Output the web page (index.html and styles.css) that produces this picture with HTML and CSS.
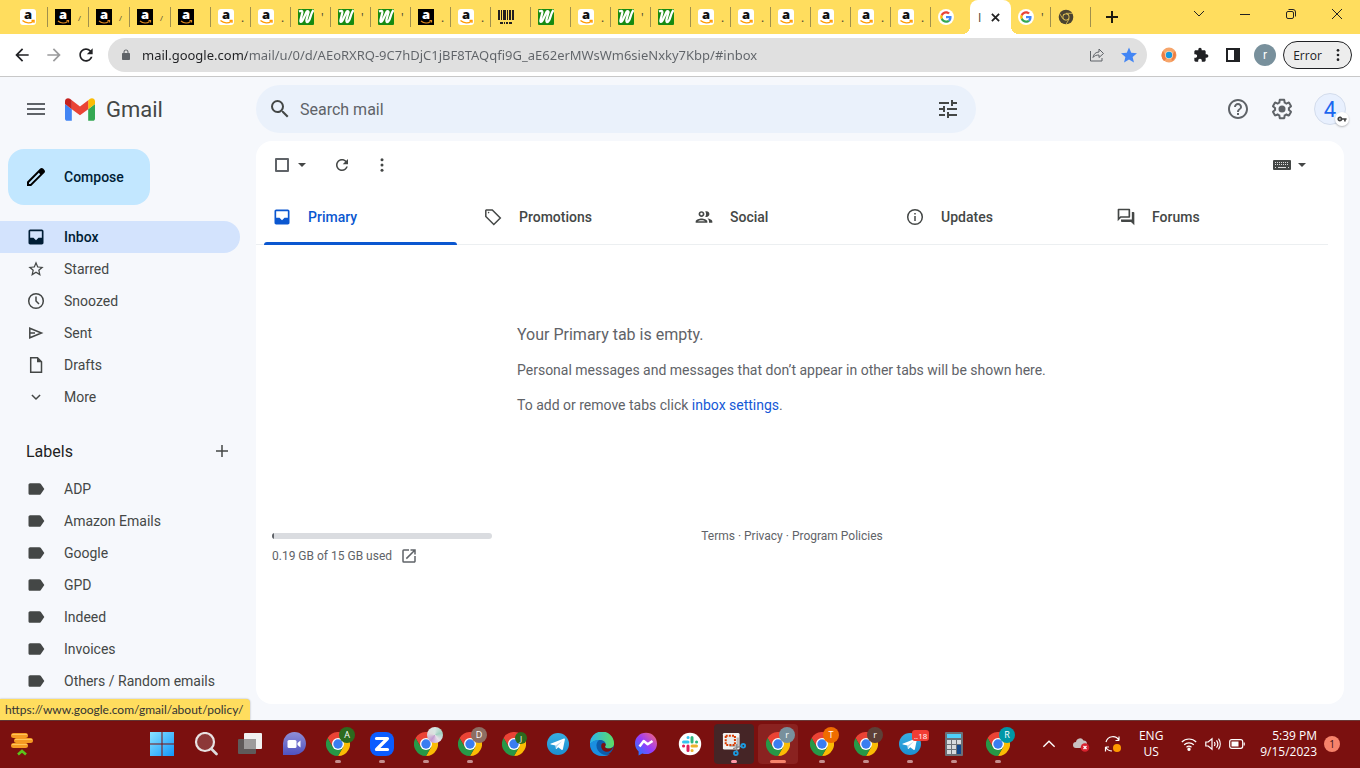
FILE: index.html
```html
<!DOCTYPE html>
<html lang="en">
<head>
  <meta charset="UTF-8" />
  <meta name="viewport" content="width=device-width, initial-scale=1.0" />
  <title>Inbox - Gmail</title>
  <link rel="stylesheet" href="styles.css">
</head>
<body>
  <svg class="sprite" aria-hidden="true">
    <defs>
      <linearGradient id="gWin" x1="0" y1="0" x2="1" y2="1"><stop offset="0" stop-color="#8be3ff"/><stop offset="1" stop-color="#1096fb"/></linearGradient>
      <linearGradient id="gTeams" x1="0" y1="0" x2="0" y2="1"><stop offset="0" stop-color="#8f8ed6"/><stop offset="1" stop-color="#4f52c0"/></linearGradient>
      <linearGradient id="gTele" x1="0" y1="0" x2="0" y2="1"><stop offset="0" stop-color="#37aee2"/><stop offset="1" stop-color="#1c8fd0"/></linearGradient>
      <linearGradient id="gMsg" x1="0" y1="1" x2="1" y2="0"><stop offset="0" stop-color="#0a84ff"/><stop offset=".5" stop-color="#9a3bfb"/><stop offset="1" stop-color="#ff6a70"/></linearGradient>
      <linearGradient id="gEdge" x1="0" y1="0" x2="1" y2="0"><stop offset="0" stop-color="#2bb4ee"/><stop offset="1" stop-color="#5fdc62"/></linearGradient>
    </defs>
    <symbol id="amazon-w" viewBox="0 0 16 16"><rect width="16" height="16" rx="3" fill="#fff"/><text x="8" y="10" text-anchor="middle" font-family="Open Sans" font-weight="800" font-size="13" fill="#111">a</text><path d="M2.500 11.500c3.500 3 8 3 10.500 1M11.500 11.500h2.500v2.200" fill="none" stroke="#f90" stroke-width="1.400"/></symbol>
    <symbol id="amazon-b" viewBox="0 0 16 16"><rect width="16" height="16" fill="#000"/><text x="8" y="10" text-anchor="middle" font-family="Open Sans" font-weight="800" font-size="13" fill="#fff">a</text><path d="M3 12c3 2.500 7 2.500 9.500 .5M11.500 11.500h2v2" fill="none" stroke="#e08a1e" stroke-width="1.200"/></symbol>
    <symbol id="green" viewBox="0 0 16 16"><rect width="16" height="16" rx="1" fill="#178a12"/><path d="M1 2.500C4 1 5 2 4 5L2.500 11c-.5 2.500 1 2.500 2 .5L8.500 3C9.500 1.500 11 2 10.300 4L8.500 10.500C8 13.500 9.500 14 11 11.500 12.500 9 13 4 15.500 1" fill="none" stroke="#fff" stroke-width="2.300" stroke-linejoin="round"/></symbol>
    <symbol id="barcode" viewBox="0 0 16 16"><path d="M0 1h2v10H0zM3 1h1v10H3zM5 1h3v10H5zM9 1h1v10H9zM11 1h2v10h-2zM14 1h2v10h-2zM2 13h3v2H2zM6 13h1v2H6zM8 13h2v2H8zM11 13h3v2h-3z" fill="#231f20"/></symbol>
    <symbol id="google" viewBox="-9 -9 66 66"><circle cx="24" cy="24" r="33" fill="#fff"/><path fill="#ea4335" d="M24 9.500c3.540 0 6.710 1.220 9.210 3.600l6.850-6.850C35.900 2.380 30.470 0 24 0 14.620 0 6.510 5.380 2.560 13.220l7.980 6.190C12.430 13.720 17.740 9.500 24 9.500z"/><path fill="#4285f4" d="M46.980 24.550c0-1.570-.15-3.090-.38-4.550H24v9.020h12.940c-.58 2.960-2.260 5.480-4.780 7.180l7.730 6c4.510-4.180 7.090-10.360 7.090-17.650z"/><path fill="#fbbc05" d="M10.530 28.590c-.48-1.450-.76-2.990-.76-4.590s.27-3.140.76-4.590l-7.980-6.190C.92 16.460 0 20.120 0 24c0 3.880.92 7.540 2.560 10.780l7.970-6.190z"/><path fill="#34a853" d="M24 48c6.480 0 11.930-2.130 15.890-5.810l-7.730-6c-2.150 1.450-4.920 2.300-8.160 2.300-6.260 0-11.570-4.220-13.470-9.910l-7.980 6.190C6.510 42.620 14.620 48 24 48z"/></symbol>
    <symbol id="chrome-gray" viewBox="0 0 24 24"><circle cx="12" cy="12" r="11" fill="#4a4331"/><path d="M12 6.500h10M7.200 14.700 2.300 6.500M16.800 14.700 12 23" stroke="#ffdd5e" stroke-width="1"/><circle cx="12" cy="12" r="5.200" fill="#ffdd5e"/><circle cx="12" cy="12" r="4" fill="#4a4331"/></symbol>
    <symbol id="chrome" viewBox="0 0 24 24"><path fill="#ea4335" d="M1.600 6A12 12 0 0 1 22.400 6H12L6.800 15z"/><path fill="#fbbc04" d="M22.400 6A12 12 0 0 1 12 24l5.200-9L12 6z"/><path fill="#279847" d="M12 24A12 12 0 0 1 1.600 6l5.200 9h10.400z"/><circle cx="12" cy="12" r="6" fill="#fff"/><circle cx="12" cy="12" r="4.700" fill="#3a7df0"/></symbol>
    <symbol id="telegram" viewBox="0 0 24 24"><circle cx="12" cy="12" r="11" fill="url(#gTele)"/><path d="M4.500 11.800 18 6.500c.7-.2 1 .2.900.9l-2 9.800c-.2.800-.8.900-1.400.5l-3.300-2.500-1.700 1.700c-.4.300-.7.200-.7-.3l-.3-3L5 12.600c-.8-.2-.8-.6-.5-.8z" fill="#fff"/><path d="m9.600 13.600 6.400-4.400-5 5.400-.5 2.300z" fill="#b9d9ee"/></symbol>
    <symbol id="back" viewBox="0 0 24 24"><path d="M20 11H7.830l5.590-5.590L12 4l-8 8 8 8 1.410-1.410L7.830 13H20v-2z"/></symbol>
    <symbol id="refresh" viewBox="0 0 24 24"><path d="M17.650 6.350C16.200 4.900 14.210 4 12 4c-4.420 0-7.990 3.580-7.990 8s3.570 8 7.990 8c3.730 0 6.840-2.550 7.730-6h-2.080c-.82 2.330-3.040 4-5.650 4-3.310 0-6-2.690-6-6s2.690-6 6-6c1.660 0 3.140.69 4.220 1.780L13 11h7V4l-2.350 2.350z"/></symbol>
    <symbol id="dots" viewBox="0 0 24 24"><circle cx="12" cy="5" r="2"/><circle cx="12" cy="12" r="2"/><circle cx="12" cy="19" r="2"/></symbol>
    <symbol id="tray-full" viewBox="0 0 24 24"><path fill-rule="evenodd" d="M19 3H5c-1.100 0-2 .9-2 2v14c0 1.100.9 2 2 2h14c1.100 0 2-.9 2-2V5c0-1.100-.9-2-2-2zm0 10h-4l-3 3-3-3H5V5h14v8z"/></symbol>
    <symbol id="label" viewBox="0 0 24 24"><path d="M17.630 5.840C17.270 5.330 16.670 5 16 5H5c-1.100 0-2 .9-2 2v10c0 1.100.9 2 2 2h11c.67 0 1.270-.33 1.630-.84L22 12z"/></symbol>
    <symbol id="caret" viewBox="0 0 10 10"><path d="M1 3h8L5 7z"/></symbol>
  </svg>

  <!-- browser tabs -->
  <div class="tabstrip">
    <div class="tab first"><svg><use href="#amazon-w"/></svg></div>
    <div class="tab wide"><svg><use href="#amazon-b"/></svg><span>/</span></div>
    <div class="tab wide"><svg><use href="#amazon-b"/></svg><span>/</span></div>
    <div class="tab wide"><svg><use href="#amazon-b"/></svg><span>/</span></div>
    <div class="tab"><svg><use href="#amazon-b"/></svg></div>
    <div class="tab"><svg><use href="#amazon-w"/></svg><span>.</span></div>
    <div class="tab"><svg><use href="#amazon-w"/></svg><span>.</span></div>
    <div class="tab"><svg><use href="#green"/></svg><span>'</span></div>
    <div class="tab"><svg><use href="#green"/></svg><span>'</span></div>
    <div class="tab"><svg><use href="#green"/></svg><span>'</span></div>
    <div class="tab"><svg><use href="#amazon-b"/></svg><span>.</span></div>
    <div class="tab"><svg><use href="#amazon-w"/></svg><span>.</span></div>
    <div class="tab"><svg><use href="#barcode"/></svg></div>
    <div class="tab"><svg><use href="#green"/></svg></div>
    <div class="tab"><svg><use href="#amazon-w"/></svg><span>.</span></div>
    <div class="tab"><svg><use href="#green"/></svg><span>'</span></div>
    <div class="tab"><svg><use href="#green"/></svg></div>
    <div class="tab"><svg><use href="#amazon-w"/></svg><span>.</span></div>
    <div class="tab"><svg><use href="#amazon-w"/></svg><span>.</span></div>
    <div class="tab"><svg><use href="#amazon-w"/></svg><span>.</span></div>
    <div class="tab"><svg><use href="#amazon-w"/></svg><span>.</span></div>
    <div class="tab"><svg><use href="#amazon-w"/></svg><span>.</span></div>
    <div class="tab"><svg><use href="#amazon-w"/></svg><span>.</span></div>
    <div class="tab"><svg><use href="#google"/></svg></div>
    <div class="tab active"><span>I</span><button class="tab-close" aria-label="Close tab"><svg viewBox="0 0 10 10"><path d="m1 1 8 8M9 1 1 9"/></svg></button></div>
    <div class="tab plain"><svg><use href="#google"/></svg><span>'</span></div>
    <div class="tab"><svg><use href="#chrome-gray"/></svg></div>
    <div class="tab new"><button class="new-tab" aria-label="New tab"><svg viewBox="0 0 12 12"><path d="M6 0v12M0 6h12"/></svg></button></div>
    <div class="win-buttons">
      <button aria-label="Search tabs"><svg viewBox="0 0 12 12"><path d="m1 3 5 5 5-5"/></svg></button>
      <button aria-label="Minimize"><svg viewBox="0 0 12 12"><path d="M1 6.500h10"/></svg></button>
      <button aria-label="Restore"><svg viewBox="0 0 12 12"><rect x="1.500" y="3.500" width="7" height="7" rx="1.500"/><path d="M3.500 1.500H8A2.500 2.500 0 0 1 10.500 4v4.500"/></svg></button>
      <button aria-label="Close"><svg viewBox="0 0 12 12"><path d="m1 1 10 10M11 1 1 11"/></svg></button>
    </div>
  </div>

  <!-- address bar -->
  <div class="toolbar">
    <button class="nav-btn" aria-label="Back"><svg><use href="#back"/></svg></button>
    <button class="nav-btn forward" aria-label="Forward"><svg><use href="#back"/></svg></button>
    <button class="nav-btn" aria-label="Reload"><svg><use href="#refresh"/></svg></button>
    <div class="omnibox">
      <svg class="lock" viewBox="0 0 24 24"><path d="M18 8h-1V6c0-2.760-2.240-5-5-5S7 3.240 7 6v2H6c-1.100 0-2 .9-2 2v10c0 1.100.9 2 2 2h12c1.100 0 2-.9 2-2V10c0-1.100-.9-2-2-2zM9 6c0-1.660 1.340-3 3-3s3 1.340 3 3v2H9V6z"/></svg>
      <input class="url" type="text" aria-label="Address and search bar" value="mail.google.com/mail/u/0/d/AEoRXRQ-9C7hDjC1jBF8TAQqfi9G_aE62erMWsWm6sieNxky7Kbp/#inbox">
      <button class="omni-btn share" aria-label="Share"><svg viewBox="0 0 16 16"><path d="M1.500 4v10h11.500v-3M4 10.500C4.500 7 7 5 10 5V2l4.500 4.500L10 10.500V8C7.500 8 5.500 8.500 4 10.500z"/></svg></button>
      <button class="omni-btn fav" aria-label="Bookmark"><svg viewBox="2 1.500 20 20"><path d="M12 17.270 18.180 21l-1.640-7.030L22 9.240l-7.190-.61L12 2 9.190 8.630 2 9.240l5.460 4.730L5.820 21z"/></svg></button>
    </div>
    <div class="extensions">
      <button aria-label="Extension"><svg viewBox="0 0 16 16"><circle cx="8" cy="8" r="7.500" fill="#f6a56b"/><path d="M2 4a7.500 7.500 0 0 0 1 10l3-3zM14 4a7.500 7.500 0 0 1-3 10l-1-4z" fill="#ee7f45"/><circle cx="8" cy="8" r="4" fill="#fbd7b4"/><circle cx="8" cy="8" r="3.200" fill="#1698e0"/></svg></button>
      <button aria-label="Extensions"><svg viewBox="0 0 24 24"><path d="M20.500 11H19V7c0-1.100-.9-2-2-2h-4V3.500C13 2.120 11.880 1 10.500 1S8 2.120 8 3.500V5H4c-1.100 0-1.990.9-1.990 2v3.800H3.500c1.490 0 2.700 1.210 2.700 2.700s-1.210 2.700-2.700 2.700H2V20c0 1.100.9 2 2 2h3.800v-1.500c0-1.490 1.210-2.700 2.700-2.700 1.490 0 2.700 1.210 2.700 2.700V22H17c1.100 0 2-.9 2-2v-4h1.500c1.380 0 2.500-1.120 2.500-2.500S21.880 11 20.500 11z"/></svg></button>
      <button aria-label="Side panel"><svg viewBox="0 0 16 16"><path fill-rule="evenodd" d="M1 1h14v14H1zM3 3v10h6V3z"/></svg></button>
      <button class="avatar" aria-label="Profile">r</button>
    </div>
    <button class="error-pill">Error<svg><use href="#dots"/></svg></button>
  </div>

  <div class="gmail">
    <header class="header">
      <div class="brand">
        <button class="icon-btn" aria-label="Main menu"><svg class="i24" viewBox="0 0 24 24"><path d="M3 18h18v-2H3v2zm0-5h18v-2H3v2zm0-7v2h18V6H3z"/></svg></button>
        <a class="logo" href="#inbox">
          <svg viewBox="52 42 88 66"><path fill="#4285f4" d="M58 108h14V74L52 59v43c0 3.320 2.690 6 6 6"/><path fill="#34a853" d="M120 108h14c3.320 0 6-2.690 6-6V59l-20 15"/><path fill="#fbbc04" d="M120 48v26l20-15v-8c0-7.420-8.470-11.650-14.400-7.200"/><path fill="#ea4335" d="M72 74V48l24 18 24-18v26L96 92"/><path fill="#c5221f" d="M52 51v8l20 15V48l-5.600-4.200c-5.940-4.450-14.400-.22-14.400 7.200"/></svg>
          <span>Gmail</span>
        </a>
      </div>
      <form class="search">
        <button type="button" class="icon-btn" aria-label="Search"><svg class="i24" viewBox="0 0 24 24"><path d="M15.500 14h-.79l-.28-.27A6.471 6.471 0 0 0 16 9.500 6.500 6.500 0 1 0 9.500 16c1.610 0 3.090-.59 4.230-1.570l.27.28v.79l5 4.990L20.490 19l-4.990-5zm-6 0C7.010 14 5 11.990 5 9.500S7.010 5 9.500 5 14 7.010 14 9.500 11.990 14 9.500 14z"/></svg></button>
        <input type="text" placeholder="Search mail" aria-label="Search mail">
        <button type="button" class="icon-btn" aria-label="Show search options"><svg class="i24" viewBox="0 0 24 24"><path d="M3 17v2h6v-2H3zM3 5v2h10V5H3zm10 16v-2h8v-2h-8v-2h-2v6h2zM7 9v2H3v2h4v2h2V9H7zm14 4v-2H11v2h10zm-6-4h2V7h4V5h-4V3h-2v6z"/></svg></button>
      </form>
      <div class="account">
        <button class="icon-btn" aria-label="Support"><svg class="i24" viewBox="0 0 24 24"><path d="M11 18h2v-2h-2v2zm1-16C6.480 2 2 6.480 2 12s4.480 10 10 10 10-4.480 10-10S17.520 2 12 2zm0 18c-4.410 0-8-3.590-8-8s3.590-8 8-8 8 3.590 8 8-3.590 8-8 8zm0-14c-2.210 0-4 1.790-4 4h2c0-1.100.9-2 2-2s2 .9 2 2c0 2-3 1.750-3 5h2c0-2.250 3-2.500 3-5 0-2.210-1.790-4-4-4z"/></svg></button>
        <button class="icon-btn" aria-label="Settings"><svg class="i24" viewBox="0 0 24 24"><path d="M13.850 22.250h-3.700c-.74 0-1.360-.54-1.450-1.270l-.27-1.890c-.27-.14-.53-.29-.79-.46l-1.800.72c-.7.26-1.470-.03-1.810-.65L2.200 15.530c-.35-.66-.2-1.440.36-1.880l1.530-1.190c-.01-.15-.02-.3-.02-.46 0-.15.01-.31.02-.46l-1.520-1.190c-.59-.45-.74-1.260-.37-1.880l1.850-3.190c.34-.62 1.110-.9 1.790-.63l1.810.73c.26-.17.52-.32.78-.46l.27-1.910c.09-.7.71-1.250 1.440-1.250h3.700c.74 0 1.360.54 1.450 1.270l.27 1.890c.27.14.53.29.79.46l1.800-.72c.71-.26 1.480.03 1.820.65l1.840 3.180c.36.66.2 1.440-.36 1.880l-1.520 1.190c.01.15.02.3.02.46s-.01.31-.02.46l1.520 1.190c.56.45.72 1.230.37 1.860l-1.860 3.220c-.34.62-1.110.9-1.800.63l-1.800-.72c-.26.17-.52.32-.78.46l-.27 1.910c-.1.680-.72 1.220-1.460 1.220zm-3.230-2h2.760l.37-2.550.53-.22c.44-.18.88-.44 1.340-.78l.45-.34 2.380.96 1.380-2.400-2.030-1.580.07-.56c.03-.26.06-.51.06-.78s-.03-.53-.06-.78l-.07-.56 2.030-1.580-1.390-2.400-2.390.96-.45-.35c-.42-.32-.87-.58-1.330-.77l-.52-.22-.37-2.550h-2.760l-.37 2.550-.53.21c-.44.19-.88.44-1.340.79l-.45.33-2.380-.95-1.390 2.390 2.030 1.580-.07.56a7 7 0 0 0-.06.79c0 .26.02.53.06.78l.07.56-2.030 1.580 1.380 2.400 2.390-.96.45.35c.43.33.86.58 1.330.77l.53.22.38 2.550z"/><circle cx="12" cy="12" r="3.500"/></svg></button>
        <button class="profile" aria-label="Google Account">4<span class="key"><svg viewBox="0 0 24 24"><path d="M12.650 10C11.830 7.670 9.610 6 7 6c-3.310 0-6 2.690-6 6s2.690 6 6 6c2.610 0 4.830-1.670 5.650-4H17v4h4v-4h2v-4H12.650zM7 14c-1.100 0-2-.9-2-2s.9-2 2-2 2 .9 2 2-.9 2-2 2z"/></svg></span></button>
      </div>
    </header>

    <div class="columns">
      <aside class="sidebar">
        <button class="compose"><svg class="i24" viewBox="0 0 24 24"><path d="M20.410 4.940l-1.350-1.350c-.78-.78-2.050-.78-2.830 0L3 16.820V21h4.180L20.410 7.770c.79-.78.79-2.050 0-2.830zm-14 14.120L5 19v-1.360l9.820-9.820 1.410 1.410-9.820 9.830z"/></svg>Compose</button>
        <nav>
          <a class="nav-item selected" href="#inbox"><svg><use href="#tray-full"/></svg>Inbox</a>
          <a class="nav-item" href="#starred"><svg viewBox="-1 -1 26 26"><path d="M22 9.240l-7.190-.62L12 2 9.190 8.630 2 9.240l5.460 4.730L5.820 21 12 17.270 18.180 21l-1.630-7.030L22 9.240zM12 15.400l-3.760 2.270 1-4.280-3.320-2.880 4.380-.38L12 6.100l1.710 4.040 4.380.38-3.320 2.880 1 4.280L12 15.400z"/></svg>Starred</a>
          <a class="nav-item" href="#snoozed"><svg class="line" viewBox="0 0 20 20"><circle cx="10" cy="10" r="7.300"/><path d="M10 5.500V10l3 3"/></svg>Snoozed</a>
          <a class="nav-item" href="#sent"><svg class="line" viewBox="0 0 20 20"><path d="M3.800 5.200 15.500 10 3.800 14.800V5.200zM3.800 10H9"/></svg>Sent</a>
          <a class="nav-item" href="#drafts"><svg class="line" viewBox="0 0 20 20"><path d="M5 2.800h6.500l4 4v10.400H4.700V2.800z"/><path class="solid" d="M11 2.500v4.800h4.800z"/></svg>Drafts</a>
          <a class="nav-item" href="#more"><svg viewBox="-1 0 26 24"><path d="M16.590 8.590 12 13.170 7.410 8.590 6 10l6 6 6-6z"/></svg>More</a>
        </nav>
        <div class="labels-head">
          <h2>Labels</h2>
          <button class="add" aria-label="Create new label"><svg class="line" viewBox="0 0 20 20"><path d="M10 4v12M4 10h12"/></svg></button>
        </div>
        <nav>
          <a class="nav-item" href="#adp"><svg><use href="#label"/></svg>ADP</a>
          <a class="nav-item" href="#amazon"><svg><use href="#label"/></svg>Amazon Emails</a>
          <a class="nav-item" href="#google-label"><svg><use href="#label"/></svg>Google</a>
          <a class="nav-item" href="#gpd"><svg><use href="#label"/></svg>GPD</a>
          <a class="nav-item" href="#indeed"><svg><use href="#label"/></svg>Indeed</a>
          <a class="nav-item" href="#invoices"><svg><use href="#label"/></svg>Invoices</a>
          <a class="nav-item" href="#others"><svg><use href="#label"/></svg>Others / Random emails</a>
        </nav>
      </aside>

      <main class="card">
        <div class="actions">
          <input type="checkbox" class="check" aria-label="Select">
          <button class="small-btn" aria-label="Select options"><svg><use href="#caret"/></svg></button>
          <button class="act-btn" aria-label="Refresh"><svg><use href="#refresh"/></svg></button>
          <button class="act-btn" aria-label="More"><svg><use href="#dots"/></svg></button>
          <button class="keyboard" aria-label="Input tools"><svg viewBox="0 0 18 12"><rect y="1" width="18" height="10" rx="1"/><path d="M2 3.500h14M2 5.500h14" stroke="#ddd" stroke-dasharray="1 1"/><path d="M2 8.500h1M5 8.500h8M15 8.500h1" stroke="#ddd"/></svg></button>
          <button class="small-btn" aria-label="Select input tool"><svg><use href="#caret"/></svg></button>
        </div>
        <div class="mail-tabs" role="tablist">
          <button class="mail-tab current" role="tab" aria-selected="true"><svg><use href="#tray-full"/></svg>Primary</button>
          <button class="mail-tab" role="tab"><svg class="line" viewBox="0 0 20 20"><path d="M2.800 3.500v6l8 8 6.500-6.500-8-8H3.300z"/><circle class="solid" cx="5.600" cy="5.600" r=".8"/></svg>Promotions</button>
          <button class="mail-tab" role="tab"><svg viewBox="0 0 24 24"><path d="M9 13.750c-2.340 0-7 1.170-7 3.500V19h14v-1.750c0-2.330-4.660-3.500-7-3.500zM4.340 17c.84-.58 2.870-1.250 4.660-1.250s3.820.67 4.660 1.250H4.340zM9 12c1.930 0 3.500-1.570 3.500-3.500S10.930 5 9 5 5.500 6.570 5.500 8.500 7.070 12 9 12zm0-5c.83 0 1.500.67 1.500 1.500S9.830 10 9 10s-1.500-.67-1.500-1.500S8.170 7 9 7zm7.040 6.810c1.160.84 1.960 1.960 1.960 3.440V19h4v-1.750c0-2.020-3.500-3.170-5.960-3.440zM15 12c1.930 0 3.500-1.570 3.500-3.500S16.930 5 15 5c-.54 0-1.040.13-1.500.35.63.89 1 1.980 1 3.150s-.37 2.260-1 3.150c.46.22.96.35 1.500.35z"/></svg>Social</button>
          <button class="mail-tab" role="tab"><svg class="line" viewBox="0 0 20 20"><circle cx="10" cy="10" r="7.300"/><path d="M10 9v5M10 6v1.600"/></svg>Updates</button>
          <button class="mail-tab" role="tab"><svg viewBox="0 0 24 24"><path d="M15 4v7H5.170L4 12.170V4h11m1-2H3c-.55 0-1 .45-1 1v14l4-4h10c.55 0 1-.45 1-1V3c0-.55-.45-1-1-1zm5 4h-2v9H6v2c0 .55.45 1 1 1h11l4 4V7c0-.55-.45-1-1-1z"/></svg>Forums</button>
        </div>
        <div class="empty">
          <p class="empty-title">Your Primary tab is empty.</p>
          <p>Personal messages and messages that don’t appear in other tabs will be shown here.</p>
          <p>To add or remove tabs click <a href="#settings">inbox settings</a>.</p>
        </div>
        <footer class="footer">
          <div class="storage">
            <div class="meter"><div class="meter-fill" style="width: 1%"></div></div>
            <a href="#storage">0.19 GB of 15 GB used <svg viewBox="0 0 24 24"><path d="M19 19H5V5h7V3H5a2 2 0 0 0-2 2v14a2 2 0 0 0 2 2h14c1.100 0 2-.9 2-2v-7h-2v7zM14 3v2h3.590l-9.830 9.830 1.410 1.410L19 6.410V10h2V3h-7z"/></svg></a>
          </div>
          <div class="legal"><a href="#terms">Terms</a> · <a href="#privacy">Privacy</a> · <a href="#policies">Program Policies</a></div>
        </footer>
      </main>
    </div>
    <div class="status">https://www.google.com/gmail/about/policy/</div>
  </div>

  <!-- windows taskbar -->
  <div class="taskbar">
    <button class="widgets" aria-label="Widgets"><svg viewBox="0 0 24 24"><g fill="#f59a23"><rect x="1" y="1" width="17" height="5" rx="2.500"/><rect x="4" y="6" width="19" height="5" rx="2.500"/><rect x="1" y="11" width="17" height="5" rx="2.500"/></g><path d="M2 2.500h15M5 7.500h17M2 12.500h15" stroke="#ffc45a"/><path d="m8 22.500 4-3.500 4 3.500" fill="none" stroke="#5bc51c" stroke-width="2.600"/></svg></button>
    <div class="apps">
      <button class="app" aria-label="Start"><svg viewBox="0 0 24 24"><path fill="url(#gWin)" d="M0 0h11.500v11.500H0zM12.500 0H24v11.500H12.500zM0 12.500h11.500V24H0zM12.500 12.500H24V24H12.500z"/></svg></button>
      <button class="app" aria-label="Search"><svg viewBox="0 0 24 24"><circle cx="11" cy="10" r="9" fill="#8d3838" stroke="#e8e2e2" stroke-width="2.200"/><path d="m17.500 17 5 5" stroke="#ddd" stroke-width="2.600" stroke-linecap="round"/></svg></button>
      <button class="app" aria-label="Task view"><svg viewBox="0 0 24 24"><rect x="6" y="1" width="18" height="16" rx="1" fill="#f1f1f1"/><rect y="7" width="18" height="15" rx="1" fill="#5f5a5a"/><path d="M6 7h12v10H6z" fill="#9d9b9b"/></svg></button>
      <button class="app" aria-label="Chat"><svg viewBox="0 0 24 24"><path d="M1 23V12A11.500 11.500 0 1 1 12 23z" fill="url(#gTeams)"/><rect x="5.500" y="8" width="9" height="8" rx="1.500" fill="#fff"/><path d="m15.500 11 3-2.500v7l-3-2.500z" fill="#fff"/></svg></button>
      <button class="app running" aria-label="Chrome A"><svg><use href="#chrome"/></svg><span class="dot green">A</span></button>
      <button class="app running" aria-label="Zoom"><svg viewBox="0 0 24 24"><rect width="24" height="24" rx="8" fill="#0b5cff"/><path d="M6.500 6.500h11l-11 11h11" fill="none" stroke="#fff" stroke-width="3.200" stroke-linejoin="round" stroke-linecap="round"/></svg></button>
      <button class="app running" aria-label="Chrome"><svg><use href="#chrome"/></svg><span class="dot photo"></span></button>
      <button class="app running" aria-label="Chrome D"><svg><use href="#chrome"/></svg><span class="dot taupe">D</span></button>
      <button class="app" aria-label="Chrome J"><svg><use href="#chrome"/></svg><span class="dot green small">J</span></button>
      <button class="app" aria-label="Telegram"><svg><use href="#telegram"/></svg></button>
      <button class="app" aria-label="Edge"><svg viewBox="0 0 24 24"><circle cx="12" cy="12" r="12" fill="#0d5cab"/><path d="M0 12A12 12 0 0 1 24 11c.5 4-3 6-6.500 5.500-2.500-.3-3-1.500-2-3C16.500 10 13 7.500 9 8c-4 .3-7 2-9 4z" fill="url(#gEdge)"/><path d="M9 8c-4 3-3.500 11 3 14 2 1 5 1.500 8 .2-2 1.300-5 2-8 1.800C5 24 0 19 0 12c2-2.500 5-4 9-4z" fill="#1b8fe0"/><path d="M15.500 13.500c-1 1.500-.5 2.700 2 3 2.500.4 4.500-.5 5.500-1.500-1 4-5 5.500-8 4.500-4-1.500-4.500-6-3-8 2-1.500 4.500 0 3.500 2z" fill="#7b1010"/></svg></button>
      <button class="app" aria-label="Messenger"><svg viewBox="0 0 24 24"><path d="M12 .7C5.500.7 1 5.500 1 11.500c0 3.300 1.400 6 3.600 8V23.500L8.300 21.600c1.200.4 2.400.5 3.700.5 6.500 0 11-4.700 11-10.600S18.500.7 12 .7z" fill="url(#gMsg)"/><path d="m5.500 14.500 4.200-5.500 4 3.200 4.800-3.200" fill="none" stroke="#fff" stroke-width="2.500" stroke-linejoin="round"/></svg></button>
      <button class="app" aria-label="Slack"><svg viewBox="0 0 24 24"><circle cx="12" cy="12" r="11.200" fill="#fff"/><g fill="none" stroke-width="3" stroke-linecap="round"><path stroke="#36c5f0" d="M5.500 10H10M10 5.500h.1"/><path stroke="#2eb67d" d="M14 5.500V10M18.500 10h.1"/><path stroke="#ecb22e" d="M14 14h4.500M14 18.500h.1"/><path stroke="#e01e5a" d="M10 14v4.500M5.500 14h.1"/></g></svg></button>
      <button class="app running snip" aria-label="Snipping Tool"><svg viewBox="0 0 26 26"><rect x="1" y="1" width="18" height="18" rx="1.500" fill="#f3f3f3"/><path d="M8 15h9V6" fill="none" stroke="#b9b9b9" stroke-width="2.500"/><path d="M4 4h10v10H4z" fill="#e9e9e9" stroke="#d83b01" stroke-width="2.200" stroke-dasharray="2.200 1.200"/><path d="m12 18 10-3M16 13v9" stroke="#8b8b8b" stroke-width="1.500"/><g fill="none" stroke="#1a9be0" stroke-width="2"><circle cx="23" cy="15" r="2"/><circle cx="15" cy="23" r="2"/></g></svg></button>
      <button class="app focused" aria-label="Chrome r"><svg><use href="#chrome"/></svg><span class="dot slate">r</span></button>
      <button class="app running" aria-label="Chrome T"><svg><use href="#chrome"/></svg><span class="dot orange">T</span></button>
      <button class="app running" aria-label="Chrome r2"><svg><use href="#chrome"/></svg><span class="dot brown">r</span></button>
      <button class="app running" aria-label="Telegram 18"><svg><use href="#telegram"/></svg><span class="count">..18</span></button>
      <button class="app running" aria-label="Calculator"><svg viewBox="0 0 24 24"><rect x="3" width="18" height="24" rx="1" fill="#6b7077"/><rect x="5" y="2" width="14" height="4" fill="#4fd0fb"/><g fill="#d5d9dd"><path d="M5 8h4v4H5zM10 8h4v4h-4zM15 8h4v4h-4zM5 13h4v4H5zM10 13h4v4h-4zM5 18h4v4H5zM10 18h4v4h-4z"/></g><path d="M15 13h4v9h-4z" fill="#10478c"/></svg></button>
      <button class="app running" aria-label="Chrome R"><svg><use href="#chrome"/></svg><span class="dot teal">R</span></button>
    </div>
    <div class="tray">
      <button class="tray-btn" aria-label="Show hidden icons"><svg viewBox="0 0 16 16"><path d="m3 10.500 5-5 5 5"/></svg></button>
      <button class="tray-btn" aria-label="OneDrive"><svg viewBox="0 0 18 16"><path d="M4 12a3 3 0 0 1 0-6 4 4 0 0 1 7.500-1.500C14 4.500 15 6 15 8v4z" fill="#c9c2c2" stroke="none"/><circle cx="13" cy="11.500" r="4.300" fill="#d8222e" stroke="none"/><path d="m11.500 10 3 3M14.500 10l-3 3" stroke-width="1.200"/></svg></button>
      <button class="tray-btn" aria-label="Windows Update"><svg viewBox="0 0 18 18"><path d="M2 7a7 7 0 0 1 13-1.500V1.500M15 5.500h-3.500M1.500 12v4.500M1.500 12H5M2 12.500A7 7 0 0 0 8 16"/><circle cx="13" cy="13" r="4" fill="#ff9a00" stroke="none"/></svg></button>
      <button class="lang"><span>ENG</span><span>US</span></button>
      <button class="quick" aria-label="Network, volume, battery">
        <svg viewBox="0 0 16 16"><path d="M.8 6c4-4 10.400-4 14.400 0M3.200 8.800c2.700-2.600 6.900-2.600 9.600 0M5.500 11.300c1.500-1.300 3.500-1.300 5 0"/><circle cx="8" cy="13.300" r="1.100" fill="#fff"/></svg>
        <svg viewBox="0 0 16 16"><path d="M.8 6h2.400L7 2.800v10.400L3.200 10H.8zM9.300 6c.8 1.200.8 2.800 0 4M11.500 4.300c1.600 2.200 1.600 5.200 0 7.400M13.500 2.700c2.300 3.100 2.300 7.500 0 10.600"/></svg>
        <svg viewBox="0 0 16 16"><rect x=".7" y="3.700" width="13" height="8.600" rx="2"/><rect x="2.500" y="5.500" width="7" height="5" fill="#fff" stroke="none"/><path d="M15.200 6.500v3"/></svg>
      </button>
      <button class="clock"><span>5:39 PM</span><span>9/15/2023</span></button>
      <button class="notify" aria-label="1 notification">1</button>
    </div>
  </div>
</body>
</html>
```
FILE: styles.css
```css
* { box-sizing: border-box; }
body { margin: 0; height: 100vh; display: flex; flex-direction: column; overflow: hidden; font-family: Roboto, "Liberation Sans", sans-serif; font-size: 14px; color: #444746; background: #f6f8fc; }
button { border: none; background: none; padding: 0; margin: 0; font: inherit; color: inherit; display: flex; align-items: center; justify-content: center; }
a { color: inherit; text-decoration: none; }
input { font: inherit; border: none; background: none; outline: none; padding: 0; min-width: 0; }
svg { display: block; flex: none; fill: currentColor; }
p, h2 { margin: 0; }
.sprite { position: absolute; width: 0; height: 0; }
.line { fill: none; stroke: currentColor; stroke-width: 1.5; }
.solid { fill: currentColor; stroke: none; }
.i24 { width: 24px; height: 24px; }

/* tab strip */
.tabstrip { flex: none; display: flex; height: 34px; padding-left: 12px; background: #ffdd5e; font-family: "Open Sans", sans-serif; font-size: 12px; color: #4a4331; }
.tab { flex: none; display: flex; align-items: center; gap: 7px; width: 40px; padding-left: 7px; border-left: 1px solid #a08f4c; height: 20px; margin-top: 7px; }
.tab svg { width: 16px; height: 16px; }
.tab.first { width: 35px; border-left: none; padding-left: 8px; }
.tab.wide { width: 41px; }
.tab.wide span { font-size: 8px; }
.tab.plain { width: 39px; border-left: none; }
.tab.active { position: relative; border: none; height: 34px; margin: 0; width: 41px; background: #fff; border-radius: 8px 8px 0 0; padding-left: 8px; gap: 8px; }
.tab.active::before, .tab.active::after { content: ""; position: absolute; bottom: 0; width: 8px; height: 8px; }
.tab.active::before { left: -8px; background: radial-gradient(circle at 0 0, #ffdd5e 8px, #fff 8px); }
.tab.active::after { right: -8px; background: radial-gradient(circle at 100% 0, #ffdd5e 8px, #fff 8px); }
.tab.active svg { width: 9px; height: 9px; stroke: #222; stroke-width: 2; }
.tab-close { width: 12px; height: 16px; }
.new-tab { margin-left: 8px; }
.tab .new-tab svg { width: 12px; height: 12px; stroke: #1d1a10; stroke-width: 2; }
.win-buttons { display: flex; margin-left: auto; height: 28px; }
.win-buttons button { width: 46px; }
.win-buttons svg { width: 12px; height: 12px; fill: none; stroke: #222; }

/* address bar */
.toolbar { flex: none; display: flex; align-items: center; height: 43px; padding: 0 8px 0 6px; background: #fff; border-bottom: 1px solid #c8c8c8; color: #202124; }
.nav-btn { width: 32px; }
.nav-btn svg { width: 20px; height: 20px; }
.forward svg { transform: scaleX(-1); opacity: .45; }
.omnibox { flex: 1; display: flex; align-items: center; height: 34px; margin-left: 6px; padding: 0 10px 0 12px; border-radius: 17px; background: #e0e0e0; }
.lock { width: 12px; height: 14px; fill: #5f6368; }
.url { flex: 1; margin-left: 10px; font-family: "Noto Sans", "Open Sans", sans-serif; font-size: 13px; color: #5f6368; background: linear-gradient(90deg, #202124 105px, #5f6368 105px); -webkit-background-clip: text; background-clip: text; -webkit-text-fill-color: transparent; }
.omni-btn svg { width: 16px; height: 16px; }
.omni-btn { width: 16px; margin-left: 16px; }
.share svg { fill: none; stroke: #5f6368; }
.fav svg { fill: #4285f4; }
.extensions { display: flex; align-items: center; margin-left: 6px; }
.extensions button { width: 32px; height: 22px; }
.extensions svg { width: 16px; height: 16px; }
.extensions .avatar { width: 22px; margin: 0 5px; border-radius: 50%; background: #78909c; color: #fff; font-size: 12px; }
.error-pill { height: 28px; width: 69px; margin-left: 2px; padding-left: 4px; gap: 8px; border: 1px solid #202124; border-radius: 14px; background: #ededed; font-family: "Open Sans", sans-serif; font-size: 12px; }
.error-pill svg { width: 16px; height: 16px; }

/* gmail */
.gmail { position: relative; flex: 1; min-height: 0; display: flex; flex-direction: column; background: #f6f8fc; }
.header { flex: none; display: flex; align-items: center; height: 64px; }
.icon-btn { width: 40px; height: 40px; color: #5f6368; }
.brand { flex: none; display: flex; align-items: center; width: 256px; padding-left: 16px; }
.logo { display: flex; align-items: center; gap: 11px; margin-left: 9px; font-size: 22px; color: #444746; }
.logo svg { width: 30px; height: 23px; }
.search { flex: 0 1 720px; display: flex; align-items: center; height: 48px; padding: 0 8px 0 4px; border-radius: 24px; background: #eaf1fb; }
.search .icon-btn { color: #444746; }
.search input { flex: 1; font-size: 16px; color: #444746; }
.search input::placeholder { color: #5f6368; opacity: 1; }
.account { display: flex; align-items: center; gap: 4px; margin-left: auto; padding-right: 14px; }
.profile { position: relative; width: 32px; height: 32px; margin-left: 8px; border: 1px solid #d3dcec; border-radius: 50%; background: #e8f0fe; color: #1a66f0; font-size: 22px; }
.key { position: absolute; right: -4px; bottom: -2px; width: 14px; height: 14px; display: flex; align-items: center; justify-content: center; border-radius: 50%; background: #fff; box-shadow: 0 1px 2px #0004; color: #444; }
.key svg { width: 10px; height: 10px; }
.columns { flex: 1; min-height: 0; display: flex; padding: 0 16px 16px 0; }
.sidebar { flex: none; width: 256px; }
.compose { height: 56px; margin: 8px 0 16px 8px; padding: 0 26px 0 16px; gap: 16px; border-radius: 16px; background: #c2e7ff; color: #001d35; font-weight: 500; }
.compose svg { fill: #000; }
.nav-item { display: flex; align-items: center; gap: 18px; height: 32px; margin-right: 16px; padding-left: 26px; }
.nav-item svg { width: 20px; height: 20px; }
.selected { background: #d3e3fd; color: #001d35; border-radius: 0 16px 16px 0; font-weight: 500; }
.labels-head { display: flex; align-items: center; justify-content: space-between; height: 60px; padding: 16px 24px 0 26px; }
.labels-head h2 { font-size: 16px; font-weight: 400; color: #1f1f1f; }
.add svg { width: 20px; height: 20px; }

.card { flex: 1; min-width: 0; background: #fff; border-radius: 16px; }
.actions { display: flex; align-items: center; height: 48px; padding: 0 35px 0 19px; }
.check { appearance: none; width: 14px; height: 14px; margin: 0; border: 2px solid #5f6368; border-radius: 1px; }
.small-btn { width: 14px; height: 20px; margin-left: 6px; }
.small-btn svg { width: 10px; height: 10px; }
.act-btn { width: 40px; height: 20px; }
.act-btn svg { width: 18px; height: 18px; }
.small-btn + .act-btn { margin-left: 13px; }
.keyboard { margin-left: auto; }
.keyboard + .small-btn { margin-left: 4px; }
.keyboard svg { width: 18px; height: 12px; }
.mail-tabs { display: flex; height: 56px; margin-right: 16px; border-bottom: 1px solid #eceff1; }
.mail-tab { position: relative; flex: 0 1 211px; justify-content: flex-start; gap: 16px; padding-left: 16px; font-weight: 500; }
.mail-tab svg { width: 20px; height: 20px; }
.current { color: #0b57d0; }
.current::after { content: ""; position: absolute; left: 8px; right: 10px; bottom: -1px; height: 3px; background: #0b57d0; border-radius: 3px 3px 0 0; }
.empty { display: flex; flex-direction: column; gap: 15px; width: 100%; max-width: 550px; margin: 80px auto 0; padding-right: 16px; box-sizing: content-box; line-height: 20px; color: #5f6368; }
.empty-title { font-size: 16px; }
.empty a { color: #1558d6; }
.footer { display: grid; grid-template-columns: 1fr 1fr 1fr; margin: 108px 16px 0 0; font-size: 12px; line-height: 20px; color: #5f6368; }
.storage { padding: 10px 0 0 16px; }
.storage a { display: flex; align-items: center; gap: 8px; margin-top: 7px; }
.storage svg { width: 18px; height: 18px; }
.meter { width: 220px; height: 6px; border-radius: 3px; background: #dadce0; overflow: hidden; }
.meter-fill { height: 6px; background: #5f6368; }
.legal { text-align: center; padding-top: 3px; }
.status { position: absolute; left: 0; bottom: 0; padding: 0 7px 0 5px; height: 21px; line-height: 21px; border-radius: 0 4px 0 0; background: #ffdd5e; box-shadow: 0 0 2px #0005; color: #333; font-family: Lato, "Open Sans", sans-serif; font-size: 12px; }

/* taskbar */
.taskbar { flex: none; display: flex; align-items: center; height: 48px; padding: 0 20px 0 10px; background: #7b100f; box-shadow: inset 0 1px #6b3a38; color: #fff; font-family: "Open Sans", sans-serif; font-size: 12px; }
.widgets svg, .app svg { width: 24px; height: 24px; }
.apps { display: flex; gap: 4px; margin-left: 108px; }
.app { position: relative; width: 40px; height: 40px; border-radius: 4px; }
.running::before, .focused::before { content: ""; position: absolute; bottom: 1px; width: 6px; height: 3px; border-radius: 2px; background: #c48d8d; }
.focused::before { width: 16px; background: #f6836b; }
.snip { background: #452526; }
.snip::before { background: #ff9aa8; }
.focused { background: #8a2220; }
.dot { position: absolute; top: 3px; right: 3px; width: 16px; height: 16px; border-radius: 50%; font-size: 9px; line-height: 16px; text-align: center; }
.small { width: 12px; height: 12px; line-height: 12px; top: 8px; right: 7px; font-size: 8px; }
.green { background: #2c6a1e; }
.taupe { background: #8d6e63; }
.slate { background: #78909c; }
.orange { background: #ef6c00; }
.brown { background: #5d4037; }
.teal { background: #0097a7; }
.photo { background: conic-gradient(#d8e6e2, #9fd0c0, #e8e1ea, #c39ad0, #ddd, #d8e6e2); }
.count { position: absolute; top: 6px; left: 22px; padding: 0 2px; border-radius: 3px; background: #f23c34; font-size: 8px; line-height: 11px; }
.tray { display: flex; align-items: center; margin-left: auto; }
.tray-btn { width: 32px; height: 40px; }
.tray svg { width: 16px; height: 16px; fill: none; stroke: #fff; stroke-width: 1.2; }
.tray-btn svg { width: 18px; height: 18px; }
.lang, .clock { flex-direction: column; line-height: 16px; }
.lang { width: 44px; }
.quick { gap: 8px; padding: 0 8px; }
.clock { align-items: flex-end; margin: 0 7px; }
.notify { width: 16px; height: 16px; border-radius: 50%; background: #f6836b; color: #3c1010; font-size: 10px; }
```
